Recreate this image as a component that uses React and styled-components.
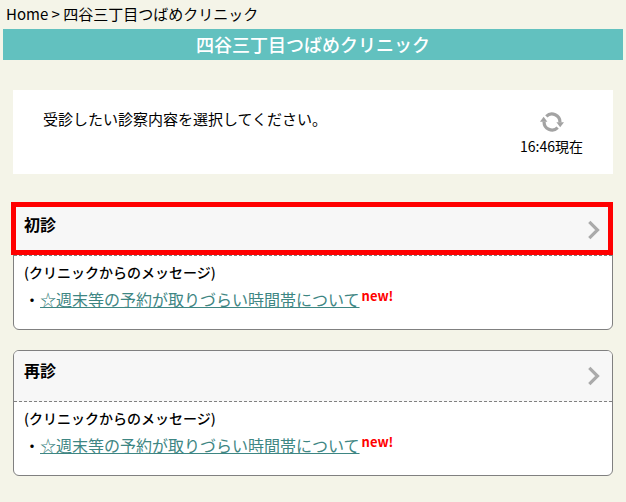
import React from "react";
import styled, { createGlobalStyle } from "styled-components";

const CLINIC = "四谷三丁目つばめクリニック";

const menus = [
  { id: "first", title: "初診", selected: true },
  { id: "return", title: "再診", selected: false },
];

const messages = ["☆週末等の予約が取りづらい時間帯について"];

const ReloadIcon = () => (
  <svg width="24" height="20" viewBox="0 0 24 20" aria-hidden="true">
    <g fill="none" stroke="#a3a3a3" strokeWidth="3.2">
      <path d="M6.3 4.3A8 8 0 0 1 19.9 10.5" />
      <path d="M17.7 15.7A8 8 0 0 1 4.1 9.5" />
    </g>
    <path d="M0 9.8L3.6 4.8L7.4 9.8Z" fill="#a3a3a3" />
    <path d="M16.4 10.2L20.2 15.2L24 10.2Z" fill="#a3a3a3" />
  </svg>
);

const ArrowIcon = () => (
  <svg width="12" height="20" viewBox="0 0 12 20" aria-hidden="true">
    <path d="M1.3 1.8L9.5 10L1.3 18.2" fill="none" stroke="#aaaaaa" strokeWidth="3.2" />
  </svg>
);

const MenuCard = ({ title, selected }) => (
  <Card>
    <CardButton type="button">
      <CardTitle>{title}</CardTitle>
      <ArrowIcon />
      {selected && <Highlight />}
    </CardButton>
    <CardBody>
      <MessageTitle>(クリニックからのメッセージ)</MessageTitle>
      {messages.map((item) => (
        <Message key={item}>
          ・<MessageLink href="#message">{item}</MessageLink>
          <NewMark>new!</NewMark>
        </Message>
      ))}
    </CardBody>
  </Card>
);

const App = () => {
  return (
    <>
      <GlobalStyle />
      <Breadcrumb>
        <HomeLink href="#home">Home</HomeLink> &gt; {CLINIC}
      </Breadcrumb>
      <PageTitle>{CLINIC}</PageTitle>
      <Main>
        <Guide>
          <GuideText>受診したい診察内容を選択してください。</GuideText>
          <Reload type="button">
            <ReloadIcon />
            <span>16:46現在</span>
          </Reload>
        </Guide>
        {menus.map((menu) => (
          <MenuCard key={menu.id} title={menu.title} selected={menu.selected} />
        ))}
      </Main>
    </>
  );
};

export default App;

const GlobalStyle = createGlobalStyle`
  * {
    box-sizing: border-box;
  }
  body {
    margin: 0;
    padding: 0 3px;
    background: #f4f4e8;
    color: #000000;
    font-family: "Noto Sans CJK JP", sans-serif;
    font-size: 15px;
  }
  button {
    font-family: inherit;
    color: inherit;
    cursor: pointer;
  }
`;

const Breadcrumb = styled.nav`
  padding: 3px 3px 4px;
  font-size: 15px;
  line-height: 22px;
`;
const HomeLink = styled.a`
  color: inherit;
  text-decoration: none;
`;
const PageTitle = styled.h1`
  margin: 0;
  background: #62c1bf;
  color: #ffffff;
  font-size: 18px;
  font-weight: 500;
  line-height: 31px;
  text-align: center;
`;

const Main = styled.main`
  display: flex;
  flex-direction: column;
  gap: 20px;
  padding: 30px 10px;
`;
const Guide = styled.section`
  display: flex;
  justify-content: space-between;
  align-items: flex-start;
  min-height: 84px;
  margin-bottom: 10px;
  padding: 18px 30px 12px;
  background: #ffffff;
`;
const GuideText = styled.p`
  margin: 0;
  line-height: 22px;
`;
const Reload = styled.button`
  display: flex;
  flex-direction: column;
  align-items: center;
  gap: 4px;
  padding: 4px 0 0;
  border: 0;
  background: none;
  font-size: 14px;
  line-height: 20px;
`;

const Card = styled.section`
  border: 1px solid #808080;
  border-radius: 6px;
  background: #ffffff;
`;
const CardButton = styled.button`
  position: relative;
  display: flex;
  justify-content: space-between;
  align-items: flex-start;
  width: 100%;
  padding: 8px 12px 8px 10px;
  border: 0;
  border-bottom: 1px dashed #808080;
  border-radius: 5px 5px 0 0;
  background: #f7f7f7;
  text-align: left;

  svg {
    margin-top: 7px;
  }
`;
const CardTitle = styled.span`
  min-height: 34px;
  font-size: 16px;
  font-weight: bold;
  line-height: 22px;
`;
const Highlight = styled.span`
  position: absolute;
  top: -3px;
  right: -1px;
  bottom: 0;
  left: -3px;
  border: 5px solid #ff0000;
`;
const CardBody = styled.div`
  padding: 4px 10px 15px;
`;
const MessageTitle = styled.h2`
  margin: 0;
  font-size: 14px;
  font-weight: 500;
  line-height: 24px;
`;
const Message = styled.p`
  display: flex;
  margin: 0;
  font-size: 16px;
  line-height: 30px;
`;
const MessageLink = styled.a`
  color: #3e8683;
`;
const NewMark = styled.span`
  margin-left: 2px;
  color: #ff0000;
  font-size: 13px;
  font-weight: bold;
  line-height: 24px;
`;
